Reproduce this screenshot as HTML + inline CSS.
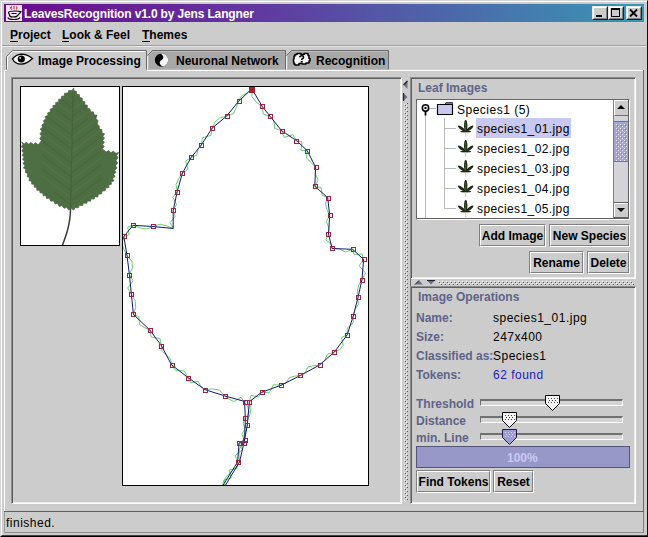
<!DOCTYPE html>
<html><head><meta charset="utf-8">
<style>
*{margin:0;padding:0;box-sizing:border-box}
html,body{width:648px;height:537px;overflow:hidden;background:#cccccc;font-family:"Liberation Sans",sans-serif}
.a{position:absolute}
.t{position:absolute;white-space:nowrap;line-height:1}
.b{font-weight:bold}
.sl{color:#5e6488;font-weight:bold;font-size:12px}
.btn{position:absolute;border-top:1px solid #808080;border-left:1px solid #808080;border-right:1px solid #fff;border-bottom:1px solid #fff;}
.rb{position:absolute;background:#cccccc;border-top:1px solid #e8e8e8;border-left:1px solid #e8e8e8;border-right:1px solid #202020;border-bottom:1px solid #202020}
.rb i{position:absolute;left:0;top:0;right:0;bottom:0;border-top:1px solid #fff;border-left:1px solid #fff;border-right:1px solid #808080;border-bottom:1px solid #808080}
.btn i{position:absolute;left:0;top:0;right:0;bottom:0;border-top:1px solid #fff;border-left:1px solid #fff;border-right:1px solid #808080;border-bottom:1px solid #808080}
.btn span{position:absolute;left:0;right:0;text-align:center;font-weight:bold;font-size:12px;color:#000;line-height:1}
</style></head><body>
<!-- window frame -->
<div class="a" style="left:0;top:0;width:648px;height:537px;border-top:1px solid #d4d4d4;border-left:1px solid #d4d4d4;border-right:1px solid #101010;border-bottom:1px solid #000"></div>
<div class="a" style="left:1px;top:1px;width:646px;height:535px;border-top:1px solid #fff;border-left:1px solid #fff;border-bottom:1px solid #404040"></div>
<div class="a" style="left:4px;top:532px;width:640px;height:1px;background:#909090"></div>
<div class="a" style="left:4px;top:512px;width:1px;height:21px;background:#a0a0a0"></div>
<div class="a" style="left:643px;top:512px;width:1px;height:21px;background:#808080"></div>
<!-- title bar -->
<div class="a" style="left:4px;top:4px;width:640px;height:18px;background:linear-gradient(90deg,#6a0a8c 0%,#6236a0 38%,#3898b4 100%)"></div>
<div class="t b" style="left:24px;top:8px;font-size:12px;letter-spacing:-0.15px;color:#fff">LeavesRecognition v1.0 by Jens Langner</div>
<!-- title icon -->
<svg class="a" style="left:6px;top:5px" width="16" height="16"><rect width="16" height="16" fill="#f6e4f6"/>
<path d="M6 4.5 L4.5 3 L6 1.5 M8 1 V4.5 M10.5 1.5 Q11.5 3 10.5 4.5" fill="none" stroke="#b03050" stroke-width="1.1"/>
<path d="M2.5 7.5 Q3 6 9 6 Q14 6 15 6.8 L11.5 10.5 Q11 12 7 12 Q3.5 12 3.5 10 Z" fill="none" stroke="#000" stroke-width="1.2"/>
<path d="M5.5 8.5 H10.5 M2 12.5 Q2 14.5 8 14.5 Q13 14.5 14 12.5" fill="none" stroke="#000" stroke-width="1.2"/>
</svg>
<!-- title buttons -->
<div class="rb" style="left:592px;top:6px;width:16px;height:14px"><i></i></div>
<div class="rb" style="left:608px;top:6px;width:16px;height:14px"><i></i></div>
<div class="rb" style="left:626px;top:6px;width:16px;height:14px"><i></i></div>
<div class="a" style="left:596px;top:15px;width:6px;height:2px;background:#000"></div>
<div class="a" style="left:611px;top:8px;width:9px;height:9px;border:1px solid #000;border-top-width:2px"></div>
<svg class="a" style="left:626px;top:6px" width="16" height="14"><path d="M4 3.5 L11 10.5 M11 3.5 L4 10.5" stroke="#000" stroke-width="1.8"/></svg>
<!-- menu -->
<div class="t b" style="left:10px;top:29px;font-size:12px;color:#000">Project</div>
<div class="t b" style="left:62px;top:29px;font-size:12px;color:#000">Look &amp; Feel</div>
<div class="t b" style="left:142px;top:29px;font-size:12px;color:#000">Themes</div>
<div class="a" style="left:10px;top:41px;width:8px;height:1px;background:#000"></div>
<div class="a" style="left:62px;top:41px;width:7px;height:1px;background:#000"></div>
<div class="a" style="left:142px;top:41px;width:8px;height:1px;background:#000"></div>
<div class="a" style="left:2px;top:45px;width:644px;height:1px;background:#a0a0a0"></div>
<div class="a" style="left:2px;top:46px;width:644px;height:1px;background:#e8e8e8"></div>

<!-- tabs -->
<div class="a" style="left:4px;top:70px;width:3px;height:1px;background:#fff"></div>
<div class="a" style="left:147px;top:70px;width:497px;height:1px;background:#fff"></div>
<div class="a" style="left:4px;top:70px;width:1px;height:442px;background:#fff"></div>
<div class="a" style="left:643px;top:70px;width:1px;height:442px;background:#686868"></div>
<div class="a" style="left:4px;top:511px;width:640px;height:1px;background:#606060"></div>
<svg class="a" style="left:0;top:46px" width="400" height="26">
<!-- tab1 selected -->
<path d="M6.5 23.5 V10.5 L12.5 4.5 H146.5 V23.5" fill="#cccccc" stroke="#6a6a6a" stroke-width="1"/>
<path d="M7.5 23.5 V10.9 L12.9 5.5 H145.5" fill="none" stroke="#ffffff" stroke-width="1"/>
<!-- tab2 -->
<path d="M147.5 23.5 V9.5 L152.5 4.5 H285.5 V23.5" fill="#a8a8a8" stroke="none"/>
<path d="M147.5 23.5 V9.5" stroke="#f0f0f0" stroke-width="1"/>
<path d="M147.5 9.5 L152.5 4.5 H285.5 V23.5" fill="none" stroke="#6a6a6a" stroke-width="1"/>
<path d="M148.5 23.5 V9.9 L152.9 5.5 H284.5" fill="none" stroke="#bcbcbc" stroke-width="1"/>
<!-- tab3 -->
<path d="M286.5 23.5 V9.5 L291.5 4.5 H388.5 V23.5" fill="#a8a8a8" stroke="none"/>
<path d="M286.5 23.5 V9.5" stroke="#f0f0f0" stroke-width="1"/>
<path d="M286.5 9.5 L291.5 4.5 H388.5 V23.5" fill="none" stroke="#6a6a6a" stroke-width="1"/>
<path d="M287.5 23.5 V9.9 L291.9 5.5 H387.5" fill="none" stroke="#bcbcbc" stroke-width="1"/>
</svg>
<!-- eye icon -->
<svg class="a" style="left:10px;top:52px" width="24" height="14">
<path d="M2.5 7 Q6 2.5 11 2.2 Q17 2.2 22.5 6.5 Q17 12 11 12.2 Q5 12 2.5 7 Z" fill="#f4f4f4" stroke="#000" stroke-width="1.3"/>
<circle cx="11.3" cy="7" r="3.6" fill="#000"/>
<circle cx="10.2" cy="6" r="1" fill="#d0d0d0"/>
</svg>
<div class="t b" style="left:38px;top:55px;font-size:12px;color:#000">Image Processing</div>
<!-- yin yang -->
<svg class="a" style="left:153px;top:52px" width="18" height="16">
<g transform="rotate(-30 8.5 8)">
<circle cx="8.5" cy="8" r="6.6" fill="#000"/>
<path d="M8.5 1.4 A6.6 6.6 0 0 1 8.5 14.6 A3.3 3.3 0 0 1 8.5 8 A3.3 3.3 0 0 0 8.5 1.4 Z" fill="#f4f4f4"/>
<circle cx="8.5" cy="4.7" r="1.2" fill="#000"/>
<circle cx="8.5" cy="11.3" r="1.2" fill="#f4f4f4"/>
</g>
</svg>
<div class="t b" style="left:176px;top:55px;font-size:12px;color:#000">Neuronal Network</div>
<!-- cloud -->
<svg class="a" style="left:288px;top:50px" width="26" height="20">
<path d="M9 3.5 H13 V4.5 H16 V3.5 H20 V5.5 H21 V8.5 H22 V11 H21 V13 H18 V14 H14 V13.5 H11 V15 H7 V14 H6 V12 H5.5 V9 H6 V6 H7 V4.5 H9 Z" fill="#f4f4f4" stroke="#000" stroke-width="1.5" stroke-linejoin="round"/>
<path d="M11.5 7.2 Q12 5.8 13.8 5.8 Q15.6 5.8 15.6 7.3 Q15.6 8.4 14 9 L13.6 10" fill="none" stroke="#000" stroke-width="1.5"/>
<rect x="12.7" y="11" width="2" height="1.6" fill="#000"/>
</svg>
<div class="t b" style="left:316px;top:55px;font-size:12px;color:#000">Recognition</div>
<!-- content: left split panel -->
<div class="a" style="left:11px;top:77px;width:391px;height:427px;border-top:1px solid #8c8c8c;border-left:1px solid #8c8c8c;box-shadow:inset 1px 1px 0 #5e5e5e,inset -1px -1px 0 #ececec;border-right:1px solid #fff;border-bottom:1px solid #fff"></div>
<div class="a" style="left:20px;top:86px;width:100px;height:160px;background:#fff;border:1px solid #000"></div>
<div class="a" style="left:122px;top:86px;width:247px;height:400px;background:#fff;border:1px solid #000"></div>
<svg class="a" style="left:0;top:0" width="130" height="250">
<clipPath id="lc"><path d="M73.7 87.9 L74.0 91.1 L76.5 91.2 L76.8 94.4 L79.3 94.6 L79.7 97.7 L82.2 98.0 L82.3 101.2 L84.8 101.6 L84.8 104.8 L87.3 105.2 L87.4 108.4 L89.8 108.7 L90.7 111.9 L93.3 111.8 L94.2 115.0 L97.0 115.2 L95.9 118.8 L98.1 120.6 L97.1 124.2 L99.2 125.8 L99.3 129.1 L101.9 129.6 L102.0 132.9 L104.7 133.8 L102.8 136.3 L104.5 138.0 L102.7 140.4 L104.4 142.2 L102.5 144.6 L104.2 146.3 L102.4 148.8 L103.6 149.9 L106.2 152.1 L108.4 150.5 L111.1 152.7 L113.2 151.2 L115.9 153.3 L118.6 152.5 L116.5 155.4 L118.1 157.7 L116.0 160.6 L117.6 162.9 L115.5 165.8 L117.1 168.1 L114.7 170.2 L116.0 172.3 L113.7 174.4 L115.0 176.5 L112.6 178.6 L113.9 181.0 L111.0 181.8 L111.5 184.2 L108.6 185.0 L109.0 187.5 L105.6 188.0 L105.3 190.6 L101.9 191.2 L101.6 193.8 L98.2 194.3 L97.8 197.0 L94.7 196.7 L94.1 199.1 L91.0 198.8 L90.5 201.2 L87.4 200.9 L86.8 203.3 L83.4 203.1 L82.5 205.6 L79.2 205.3 L78.3 207.8 L74.9 207.5 L73.8 210.1 L70.9 208.3 L68.8 210.1 L66.6 207.3 L64.1 208.3 L61.9 205.6 L59.3 206.5 L57.7 203.4 L55.0 203.8 L53.5 200.7 L50.8 201.2 L49.2 198.1 L46.5 198.5 L45.8 195.5 L43.3 195.8 L42.6 192.8 L40.2 193.1 L39.4 190.1 L36.9 190.4 L36.7 187.3 L34.3 187.3 L34.1 184.2 L31.7 184.1 L31.5 181.1 L29.0 180.8 L29.5 177.6 L27.1 176.6 L27.7 173.4 L25.3 172.4 L25.8 169.2 L23.4 168.1 L25.0 165.4 L23.0 163.8 L24.6 161.1 L22.6 159.6 L24.2 156.9 L22.2 155.4 L23.8 152.7 L21.8 151.2 L23.4 148.5 L21.4 147.0 L23.0 144.3 L21.6 142.1 L24.3 144.0 L26.2 142.3 L28.9 144.2 L30.8 142.5 L33.5 144.4 L35.4 142.7 L38.1 144.6 L39.4 143.5 L41.4 140.7 L39.7 138.7 L41.6 135.9 L39.9 133.9 L41.9 131.2 L40.2 129.0 L42.9 127.2 L41.8 124.9 L44.4 123.1 L43.4 120.8 L46.0 119.0 L45.0 116.6 L48.0 115.4 L47.6 112.9 L50.6 111.8 L50.1 109.3 L53.2 108.1 L52.8 105.6 L55.8 105.0 L55.7 102.5 L58.7 101.9 L58.6 99.4 L61.6 98.8 L61.5 96.4 L64.5 95.8 L64.5 93.2 L68.0 93.1 L68.7 90.5 L72.2 90.4 Z"/></clipPath>
<path d="M70.5 209 Q70.5 220 67 232 Q64.5 240 62.5 245" fill="none" stroke="#3c3c38" stroke-width="1.5"/>
<path d="M73.7 87.9 L74.0 91.1 L76.5 91.2 L76.8 94.4 L79.3 94.6 L79.7 97.7 L82.2 98.0 L82.3 101.2 L84.8 101.6 L84.8 104.8 L87.3 105.2 L87.4 108.4 L89.8 108.7 L90.7 111.9 L93.3 111.8 L94.2 115.0 L97.0 115.2 L95.9 118.8 L98.1 120.6 L97.1 124.2 L99.2 125.8 L99.3 129.1 L101.9 129.6 L102.0 132.9 L104.7 133.8 L102.8 136.3 L104.5 138.0 L102.7 140.4 L104.4 142.2 L102.5 144.6 L104.2 146.3 L102.4 148.8 L103.6 149.9 L106.2 152.1 L108.4 150.5 L111.1 152.7 L113.2 151.2 L115.9 153.3 L118.6 152.5 L116.5 155.4 L118.1 157.7 L116.0 160.6 L117.6 162.9 L115.5 165.8 L117.1 168.1 L114.7 170.2 L116.0 172.3 L113.7 174.4 L115.0 176.5 L112.6 178.6 L113.9 181.0 L111.0 181.8 L111.5 184.2 L108.6 185.0 L109.0 187.5 L105.6 188.0 L105.3 190.6 L101.9 191.2 L101.6 193.8 L98.2 194.3 L97.8 197.0 L94.7 196.7 L94.1 199.1 L91.0 198.8 L90.5 201.2 L87.4 200.9 L86.8 203.3 L83.4 203.1 L82.5 205.6 L79.2 205.3 L78.3 207.8 L74.9 207.5 L73.8 210.1 L70.9 208.3 L68.8 210.1 L66.6 207.3 L64.1 208.3 L61.9 205.6 L59.3 206.5 L57.7 203.4 L55.0 203.8 L53.5 200.7 L50.8 201.2 L49.2 198.1 L46.5 198.5 L45.8 195.5 L43.3 195.8 L42.6 192.8 L40.2 193.1 L39.4 190.1 L36.9 190.4 L36.7 187.3 L34.3 187.3 L34.1 184.2 L31.7 184.1 L31.5 181.1 L29.0 180.8 L29.5 177.6 L27.1 176.6 L27.7 173.4 L25.3 172.4 L25.8 169.2 L23.4 168.1 L25.0 165.4 L23.0 163.8 L24.6 161.1 L22.6 159.6 L24.2 156.9 L22.2 155.4 L23.8 152.7 L21.8 151.2 L23.4 148.5 L21.4 147.0 L23.0 144.3 L21.6 142.1 L24.3 144.0 L26.2 142.3 L28.9 144.2 L30.8 142.5 L33.5 144.4 L35.4 142.7 L38.1 144.6 L39.4 143.5 L41.4 140.7 L39.7 138.7 L41.6 135.9 L39.9 133.9 L41.9 131.2 L40.2 129.0 L42.9 127.2 L41.8 124.9 L44.4 123.1 L43.4 120.8 L46.0 119.0 L45.0 116.6 L48.0 115.4 L47.6 112.9 L50.6 111.8 L50.1 109.3 L53.2 108.1 L52.8 105.6 L55.8 105.0 L55.7 102.5 L58.7 101.9 L58.6 99.4 L61.6 98.8 L61.5 96.4 L64.5 95.8 L64.5 93.2 L68.0 93.1 L68.7 90.5 L72.2 90.4 Z" fill="#4e6e44" stroke="#42603a" stroke-width="0.7"/>
<g clip-path="url(#lc)" stroke-width="1" fill="none" opacity="0.55"><path d="M71.5 100 L53.5 86.5" stroke="#5c7c4e"/><path d="M71.5 103 L89.5 89.5" stroke="#41603a"/><path d="M71.5 107 L53.5 93.5" stroke="#41603a"/><path d="M71.5 110 L89.5 96.5" stroke="#5c7c4e"/><path d="M71.5 114 L53.5 100.5" stroke="#5c7c4e"/><path d="M71.5 117 L89.5 103.5" stroke="#41603a"/><path d="M71.5 121 L53.5 107.5" stroke="#41603a"/><path d="M71.5 124 L89.5 110.5" stroke="#5c7c4e"/><path d="M71.5 128 L53.5 114.5" stroke="#5c7c4e"/><path d="M71.5 131 L89.5 117.5" stroke="#41603a"/><path d="M71.5 135 L41.5 112.5" stroke="#41603a"/><path d="M71.5 138 L101.5 115.5" stroke="#5c7c4e"/><path d="M71.5 142 L41.5 119.5" stroke="#5c7c4e"/><path d="M71.5 145 L101.5 122.5" stroke="#41603a"/><path d="M71.5 149 L41.5 126.5" stroke="#41603a"/><path d="M71.5 152 L101.5 129.5" stroke="#5c7c4e"/><path d="M71.5 156 L41.5 133.5" stroke="#5c7c4e"/><path d="M71.5 159 L101.5 136.5" stroke="#41603a"/><path d="M71.5 163 L41.5 140.5" stroke="#41603a"/><path d="M71.5 166 L101.5 143.5" stroke="#5c7c4e"/><path d="M71.5 170 L41.5 147.5" stroke="#5c7c4e"/><path d="M71.5 173 L101.5 150.5" stroke="#41603a"/><path d="M71.5 177 L41.5 154.5" stroke="#41603a"/><path d="M71.5 180 L101.5 157.5" stroke="#5c7c4e"/><path d="M71.5 184 L41.5 161.5" stroke="#5c7c4e"/><path d="M71.5 187 L101.5 164.5" stroke="#41603a"/><path d="M71.5 191 L41.5 168.5" stroke="#41603a"/><path d="M71.5 194 L101.5 171.5" stroke="#5c7c4e"/><path d="M71.5 198 L41.5 175.5" stroke="#5c7c4e"/><path d="M71.5 201 L101.5 178.5" stroke="#41603a"/><path d="M71.5 205 L53.5 191.5" stroke="#41603a"/><path d="M71.5 208 L89.5 194.5" stroke="#5c7c4e"/></g>
<path d="M73 92 Q72 150 70.5 210" stroke="#41603a" stroke-width="1.1" fill="none" opacity="0.7"/>
</svg>
<svg class="a" style="left:0;top:0" width="648" height="537">
<clipPath id="cc"><rect x="123" y="87" width="245" height="398"/></clipPath><g clip-path="url(#cc)">
<path d="M251.8 88.8 L247.4 93.0 L241.6 95.7 L238.6 101.3 L236.2 107.5 L233.7 113.7 L226.6 116.1 L219.8 117.8 L215.0 121.9 L212.1 128.2 L211.0 135.4 L202.4 137.8 L201.3 145.0 L197.9 149.1 L196.9 155.2 L191.2 157.4 L185.6 161.2 L188.0 169.3 L182.4 173.1 L178.7 178.7 L176.0 184.6 L177.2 191.6 L172.9 197.2 L176.5 204.5 L173.2 210.4 L175.2 216.4 L170.2 222.5 L173.2 228.5 L166.7 225.8 L160.1 224.2 L153.1 226.5 L146.3 229.1 L139.6 227.7 L133.1 225.3 L127.7 227.1 L129.2 234.7 L123.8 236.5 L121.9 243.3 L124.0 249.4 L127.0 255.4 L131.8 261.3 L132.6 267.7 L129.4 274.6 L133.1 280.9 L127.7 288.0 L131.4 294.3 L135.1 300.7 L135.7 307.4 L133.4 314.4 L138.9 316.9 L139.5 324.4 L144.3 327.5 L149.8 330.0 L151.2 337.0 L159.9 338.5 L161.3 345.5 L162.1 351.3 L166.4 355.1 L170.7 359.0 L171.5 364.8 L175.7 370.6 L184.3 370.9 L187.9 377.5 L190.5 383.0 L198.2 381.2 L200.8 386.6 L205.1 389.7 L212.5 388.9 L219.4 390.0 L224.7 395.9 L229.3 399.3 L234.1 401.6 L240.9 397.3 L244.6 402.0 L247.8 407.2 L249.1 412.5 L245.3 418.0 L243.1 423.4 L244.9 428.9 L241.8 434.2 L244.6 439.7 L243.4 444.0 L239.0 443.2 L242.5 449.8 L235.1 455.5 L237.6 462.0 L237.1 468.4 L229.0 470.0 L231.1 478.0 L223.8 480.1 L222.5 486.0 L223.8 484.0 L225.0 486.0 L224.5 479.1 L228.2 474.8 L232.0 470.6 L236.6 466.8 L239.5 462.0 L239.0 455.3 L239.5 448.8 L243.9 443.2 L243.1 436.8 L246.2 431.1 L247.3 425.0 L247.8 419.2 L250.3 413.5 L250.9 407.7 L249.4 401.7 L251.0 395.4 L258.7 397.0 L261.5 392.3 L269.1 392.8 L273.6 384.7 L281.2 385.2 L286.0 382.8 L289.5 377.6 L294.8 376.1 L300.5 375.4 L305.2 372.8 L308.1 366.7 L313.8 365.8 L319.5 365.0 L324.5 360.7 L327.5 354.1 L334.4 352.0 L340.0 349.5 L343.2 345.2 L341.6 337.4 L347.2 334.9 L347.3 328.1 L353.1 323.0 L353.2 316.2 L354.8 309.9 L358.3 304.2 L358.0 297.4 L357.4 291.0 L358.7 285.0 L362.0 279.5 L365.5 273.0 L359.1 265.8 L363.6 259.4 L362.0 253.8 L354.2 254.9 L352.6 249.3 L345.6 252.0 L338.9 248.8 L332.1 248.5 L330.9 243.7 L325.8 239.9 L328.5 234.1 L328.9 227.8 L326.3 221.3 L329.7 215.2 L327.0 209.6 L325.4 203.8 L327.7 197.6 L322.1 195.3 L321.1 187.8 L314.8 186.3 L318.1 180.0 L315.3 173.5 L315.6 167.1 L311.0 162.5 L306.4 157.9 L307.2 150.6 L300.9 150.2 L302.0 141.7 L296.4 140.6 L293.1 134.8 L284.2 137.3 L281.5 130.6 L274.6 128.4 L274.0 121.2 L270.3 116.5 L263.2 114.0 L262.3 106.5 L256.2 102.1 L251.9 96.7 L251.8 88.8" fill="none" stroke="#6cce6c" stroke-width="1" stroke-linejoin="round"/>
<path d="M251.8 88.8 L238.6 101.3 L226.6 116.1 L212.1 128.2 L201.3 145.0 L191.2 157.4 L182.4 173.1 L177.2 191.6 L173.2 210.4 L173.2 228.5 L153.1 226.5 L133.1 225.3 L123.8 236.5 L127.0 255.4 L129.4 274.6 L131.4 294.3 L133.4 314.4 L149.8 330.0 L161.3 345.5 L171.5 364.8 L187.9 377.5 L205.1 389.7 L224.7 395.9 L245.2 401.6 L244.6 402.0 L245.3 418.0 L244.6 439.7 L239.0 443.2 L237.6 462.0 L222.5 486.0 L225.0 486.0 L239.5 462.0 L243.9 443.2 L247.3 425.0 L249.4 401.7 L261.5 392.3 L281.2 385.2 L300.5 375.4 L319.5 365.0 L334.4 352.0 L347.2 334.9 L353.2 316.2 L358.0 297.4 L362.0 279.5 L363.6 259.4 L352.6 249.3 L332.1 248.5 L328.5 234.1 L329.7 215.2 L327.7 197.6 L314.8 186.3 L315.6 167.1 L307.2 150.6 L296.4 140.6 L281.5 130.6 L270.3 116.5 L262.3 106.5 L251.8 88.8" fill="none" stroke="#111c70" stroke-width="1" stroke-linejoin="round"/>
<g fill="none" stroke="#9c2444" stroke-width="1"><rect x="237.5" y="99.5" width="4" height="4"/><rect x="225.5" y="114.5" width="4" height="4"/><rect x="210.5" y="126.5" width="4" height="4"/><rect x="199.5" y="143.5" width="4" height="4"/><rect x="189.5" y="155.5" width="4" height="4"/><rect x="180.5" y="171.5" width="4" height="4"/><rect x="175.5" y="190.5" width="4" height="4"/><rect x="171.5" y="208.5" width="4" height="4"/><rect x="151.5" y="224.5" width="4" height="4"/><rect x="131.5" y="223.5" width="4" height="4"/><rect x="122.5" y="234.5" width="4" height="4"/><rect x="125.5" y="253.5" width="4" height="4"/><rect x="127.5" y="273.5" width="4" height="4"/><rect x="129.5" y="292.5" width="4" height="4"/><rect x="131.5" y="312.5" width="4" height="4"/><rect x="148.5" y="328.5" width="4" height="4"/><rect x="159.5" y="344.5" width="4" height="4"/><rect x="170.5" y="363.5" width="4" height="4"/><rect x="186.5" y="376.5" width="4" height="4"/><rect x="203.5" y="388.5" width="4" height="4"/><rect x="223.5" y="394.5" width="4" height="4"/><rect x="243.5" y="400.5" width="4" height="4"/><rect x="243.5" y="400.5" width="4" height="4"/><rect x="243.5" y="416.5" width="4" height="4"/><rect x="243.5" y="438.5" width="4" height="4"/><rect x="237.5" y="441.5" width="4" height="4"/><rect x="236.5" y="460.5" width="4" height="4"/><rect x="242.5" y="441.5" width="4" height="4"/><rect x="245.5" y="423.5" width="4" height="4"/><rect x="247.5" y="400.5" width="4" height="4"/><rect x="260.5" y="390.5" width="4" height="4"/><rect x="279.5" y="383.5" width="4" height="4"/><rect x="298.5" y="373.5" width="4" height="4"/><rect x="318.5" y="363.5" width="4" height="4"/><rect x="332.5" y="350.5" width="4" height="4"/><rect x="345.5" y="333.5" width="4" height="4"/><rect x="351.5" y="314.5" width="4" height="4"/><rect x="356.5" y="295.5" width="4" height="4"/><rect x="360.5" y="278.5" width="4" height="4"/><rect x="362.5" y="257.5" width="4" height="4"/><rect x="351.5" y="247.5" width="4" height="4"/><rect x="330.5" y="246.5" width="4" height="4"/><rect x="326.5" y="232.5" width="4" height="4"/><rect x="328.5" y="213.5" width="4" height="4"/><rect x="326.5" y="196.5" width="4" height="4"/><rect x="313.5" y="184.5" width="4" height="4"/><rect x="314.5" y="165.5" width="4" height="4"/><rect x="305.5" y="149.5" width="4" height="4"/><rect x="294.5" y="139.5" width="4" height="4"/><rect x="280.5" y="129.5" width="4" height="4"/><rect x="268.5" y="114.5" width="4" height="4"/><rect x="260.5" y="104.5" width="4" height="4"/><rect x="250.5" y="87.5" width="4" height="4"/></g>
<rect x="249" y="87" width="6" height="6" fill="#a82030"/>
</g></svg>


<!-- vertical divider -->
<svg class="a" style="left:402px;top:78px" width="8" height="426">
<path d="M5.5 3 L1.5 7 L5.5 11 Z" fill="#6c7088"/><path d="M5.5 3 L1.5 7" stroke="#202030" stroke-width="1.2"/>
<path d="M1.5 15 L5.5 19 L1.5 23 Z" fill="#6c7088"/><path d="M1.5 15 V23" stroke="#202030" stroke-width="1.2"/>
<pattern id="dots" x="2" y="2" width="4" height="4" patternUnits="userSpaceOnUse"><rect x="0" y="0" width="1" height="1" fill="#ffffff"/><rect x="1" y="1" width="1" height="1" fill="#555"/><rect x="2" y="2" width="1" height="1" fill="#ffffff"/><rect x="3" y="3" width="1" height="1" fill="#555"/></pattern>
<rect x="2" y="25" width="4" height="398" fill="url(#dots)"/>
</svg>
<!-- right upper panel -->
<div class="a" style="left:410px;top:77px;width:226px;height:202px;border-top:1px solid #8c8c8c;border-left:1px solid #8c8c8c;box-shadow:inset 1px 1px 0 #5e5e5e,inset -1px -1px 0 #ececec;border-right:1px solid #fff;border-bottom:1px solid #fff"></div>
<div class="t sl" style="left:418px;top:82px">Leaf Images</div>
<div class="a" style="left:416px;top:99px;width:214px;height:121px;background:#fff;border-top:1px solid #686868;border-left:1px solid #686868;border-right:1px solid #fff;border-bottom:1px solid #fff;box-shadow:inset -1px -1px 0 #606060"></div>
<div class="a" style="left:425px;top:115px;width:1px;height:103px;background:#b8b8c8"></div>
<div class="a" style="left:444px;top:118px;width:1px;height:91px;background:#b8b8c8"></div>
<div class="a" style="left:428px;top:108px;width:8px;height:1px;background:#b8b8c8"></div>
<svg class="a" style="left:420px;top:102px" width="12" height="14"><circle cx="5.5" cy="6" r="3.2" fill="#f0f0f8" stroke="#000" stroke-width="1.5"/><rect x="4.5" y="5" width="2" height="2" fill="#000"/><rect x="4.6" y="9" width="1.8" height="4.5" fill="#000"/></svg>
<svg class="a" style="left:436px;top:101px" width="18" height="15"><path d="M10 1.5 H16.5 V3.5 H9 Z" fill="#70708c" stroke="#303040" stroke-width="0.8"/><path d="M1.5 3.5 H16.5 V13.5 H1.5 Z" fill="#c8c8f0" stroke="#000" stroke-width="1.2"/></svg>
<div class="t" style="left:457px;top:104px;font-size:12px;letter-spacing:0.5px;color:#000">Species1 (5)</div>
<div class="a" style="left:476px;top:118px;width:95px;height:20px;background:#c8c8f0"></div>
<div class="a" style="left:444px;top:128px;width:12px;height:1px;background:#b8b8c8"></div>
<div class="a" style="left:457px;top:119px;width:16px;height:16px"><svg width="18" height="20"><g fill="#1f2a16"><ellipse cx="8.7" cy="6.8" rx="1.7" ry="6"/><ellipse cx="4.8" cy="9.6" rx="1.4" ry="4.6" transform="rotate(-52 4.8 9.6)"/><ellipse cx="12.6" cy="9.6" rx="1.4" ry="4.6" transform="rotate(52 12.6 9.6)"/><ellipse cx="8.7" cy="12.6" rx="5.5" ry="0.9"/></g><path d="M8.7 3 V12" stroke="#4a6a34" stroke-width="0.8"/><path d="M8.7 13 V18" stroke="#c8c8c8" stroke-width="1"/></svg></div>
<div class="t" style="left:477px;top:123px;font-size:12px;letter-spacing:0.4px;color:#000">species1_01.jpg</div>
<div class="a" style="left:444px;top:148px;width:12px;height:1px;background:#b8b8c8"></div>
<div class="a" style="left:457px;top:139px;width:16px;height:16px"><svg width="18" height="20"><g fill="#1f2a16"><ellipse cx="8.7" cy="6.8" rx="1.7" ry="6"/><ellipse cx="4.8" cy="9.6" rx="1.4" ry="4.6" transform="rotate(-52 4.8 9.6)"/><ellipse cx="12.6" cy="9.6" rx="1.4" ry="4.6" transform="rotate(52 12.6 9.6)"/><ellipse cx="8.7" cy="12.6" rx="5.5" ry="0.9"/></g><path d="M8.7 3 V12" stroke="#4a6a34" stroke-width="0.8"/><path d="M8.7 13 V18" stroke="#c8c8c8" stroke-width="1"/></svg></div>
<div class="t" style="left:477px;top:143px;font-size:12px;letter-spacing:0.4px;color:#000">species1_02.jpg</div>
<div class="a" style="left:444px;top:168px;width:12px;height:1px;background:#b8b8c8"></div>
<div class="a" style="left:457px;top:159px;width:16px;height:16px"><svg width="18" height="20"><g fill="#1f2a16"><ellipse cx="8.7" cy="6.8" rx="1.7" ry="6"/><ellipse cx="4.8" cy="9.6" rx="1.4" ry="4.6" transform="rotate(-52 4.8 9.6)"/><ellipse cx="12.6" cy="9.6" rx="1.4" ry="4.6" transform="rotate(52 12.6 9.6)"/><ellipse cx="8.7" cy="12.6" rx="5.5" ry="0.9"/></g><path d="M8.7 3 V12" stroke="#4a6a34" stroke-width="0.8"/><path d="M8.7 13 V18" stroke="#c8c8c8" stroke-width="1"/></svg></div>
<div class="t" style="left:477px;top:163px;font-size:12px;letter-spacing:0.4px;color:#000">species1_03.jpg</div>
<div class="a" style="left:444px;top:188px;width:12px;height:1px;background:#b8b8c8"></div>
<div class="a" style="left:457px;top:179px;width:16px;height:16px"><svg width="18" height="20"><g fill="#1f2a16"><ellipse cx="8.7" cy="6.8" rx="1.7" ry="6"/><ellipse cx="4.8" cy="9.6" rx="1.4" ry="4.6" transform="rotate(-52 4.8 9.6)"/><ellipse cx="12.6" cy="9.6" rx="1.4" ry="4.6" transform="rotate(52 12.6 9.6)"/><ellipse cx="8.7" cy="12.6" rx="5.5" ry="0.9"/></g><path d="M8.7 3 V12" stroke="#4a6a34" stroke-width="0.8"/><path d="M8.7 13 V18" stroke="#c8c8c8" stroke-width="1"/></svg></div>
<div class="t" style="left:477px;top:183px;font-size:12px;letter-spacing:0.4px;color:#000">species1_04.jpg</div>
<div class="a" style="left:444px;top:208px;width:12px;height:1px;background:#b8b8c8"></div>
<div class="a" style="left:457px;top:199px;width:16px;height:16px"><svg width="18" height="20"><g fill="#1f2a16"><ellipse cx="8.7" cy="6.8" rx="1.7" ry="6"/><ellipse cx="4.8" cy="9.6" rx="1.4" ry="4.6" transform="rotate(-52 4.8 9.6)"/><ellipse cx="12.6" cy="9.6" rx="1.4" ry="4.6" transform="rotate(52 12.6 9.6)"/><ellipse cx="8.7" cy="12.6" rx="5.5" ry="0.9"/></g><path d="M8.7 3 V12" stroke="#4a6a34" stroke-width="0.8"/><path d="M8.7 13 V18" stroke="#c8c8c8" stroke-width="1"/></svg></div>
<div class="t" style="left:477px;top:203px;font-size:12px;letter-spacing:0.4px;color:#000">species1_05.jpg</div>

<!-- scrollbar -->
<div class="a" style="left:613px;top:100px;width:1px;height:118px;background:#808080"></div>
<div class="a" style="left:614px;top:100px;width:14px;height:118px;background:#d4d4d8"></div>
<div class="a" style="left:614px;top:100px;width:14px;height:16px;background:#cccccc;border-top:1px solid #fff;border-left:1px solid #fff;border-bottom:1px solid #707070"></div>
<svg class="a" style="left:614px;top:100px" width="14" height="16"><path d="M3 9 L7 5 L11 9 Z" fill="#000"/></svg>
<div class="a" style="left:614px;top:202px;width:14px;height:16px;background:#cccccc;border-top:1px solid #606060;border-bottom:1px solid #606060;box-shadow:inset 1px 1px 0 #fff"></div>
<svg class="a" style="left:614px;top:202px" width="14" height="16"><path d="M3 6 L7 10 L11 6 Z" fill="#000"/></svg>
<div class="a" style="left:614px;top:121px;width:14px;height:41px;background:#a4a4dc;border-top:1px solid #707098;border-bottom:1px solid #707098"></div>
<svg class="a" style="left:615px;top:123px" width="12" height="38"><pattern id="tdots" width="4" height="4" patternUnits="userSpaceOnUse"><rect x="1" y="1" width="1" height="1" fill="#f0f0ff"/><rect x="3" y="3" width="1" height="1" fill="#f0f0ff"/><rect x="2" y="2" width="1" height="1" fill="#7878b0"/></pattern><rect width="12" height="38" fill="url(#tdots)"/></svg>

<!-- buttons -->
<div class="btn" style="left:479px;top:224px;width:67px;height:23px"><i></i><span style="top:5px">Add Image</span></div>
<div class="btn" style="left:549px;top:224px;width:81px;height:23px"><i></i><span style="top:5px">New Species</span></div>
<div class="btn" style="left:529px;top:251px;width:55px;height:23px"><i></i><span style="top:5px">Rename</span></div>
<div class="btn" style="left:587px;top:251px;width:43px;height:23px"><i></i><span style="top:5px">Delete</span></div>

<!-- horizontal divider -->
<svg class="a" style="left:411px;top:279px" width="225" height="8">
<path d="M4 5.5 L8 1.5 L12 5.5 Z" fill="#6c7088"/><path d="M4 5.5 L8 1.5" stroke="#202030" stroke-width="1"/>
<path d="M16 1.5 L20 5.5 L24 1.5 Z" fill="#6c7088"/><path d="M16 1.5 H24" stroke="#202030" stroke-width="1"/>
<pattern id="hdots" x="27" y="2" width="4" height="4" patternUnits="userSpaceOnUse"><rect x="0" y="0" width="1" height="1" fill="#ffffff"/><rect x="1" y="1" width="1" height="1" fill="#555"/><rect x="2" y="2" width="1" height="1" fill="#ffffff"/><rect x="3" y="3" width="1" height="1" fill="#555"/></pattern>
<rect x="27" y="2" width="196" height="4" fill="url(#hdots)"/>
</svg>

<div class="a" style="left:410px;top:278px;width:1px;height:9px;background:#707070"></div>
<!-- lower panel -->
<div class="a" style="left:410px;top:286px;width:226px;height:218px;border-top:1px solid #8c8c8c;border-left:1px solid #8c8c8c;box-shadow:inset 1px 1px 0 #5e5e5e,inset -1px -1px 0 #ececec;border-right:1px solid #fff;border-bottom:1px solid #fff"></div>
<div class="t sl" style="left:418px;top:291px">Image Operations</div>
<div class="t sl" style="left:416px;top:312px">Name:</div>
<div class="t sl" style="left:416px;top:331px">Size:</div>
<div class="t sl" style="left:416px;top:350px">Classified as:</div>
<div class="t sl" style="left:416px;top:369px">Tokens:</div>
<div class="t" style="left:493px;top:312px;font-size:12px;letter-spacing:0.5px;color:#000">species1_01.jpg</div>
<div class="t" style="left:493px;top:331px;font-size:12px;letter-spacing:0.5px;color:#000">247x400</div>
<div class="t" style="left:493px;top:350px;font-size:12px;letter-spacing:0.5px;color:#000">Species1</div>
<div class="t" style="left:493px;top:369px;font-size:12px;letter-spacing:0.5px;color:#2020c0">62 found</div>
<div class="t sl" style="left:416px;top:398px">Threshold</div>
<div class="t sl" style="left:416px;top:415px">Distance</div>
<div class="t sl" style="left:416px;top:432px">min. Line</div>
<!-- slider tracks -->
<div class="a" style="left:480px;top:399px;width:143px;height:7px;background:#d4d4d4;border-top:2px solid #707070;border-left:1px solid #707070;border-right:1px solid #fff;border-bottom:1px solid #fff"></div>
<div class="a" style="left:480px;top:416px;width:143px;height:7px;background:#d4d4d4;border-top:2px solid #707070;border-left:1px solid #707070;border-right:1px solid #fff;border-bottom:1px solid #fff"></div>
<div class="a" style="left:480px;top:433px;width:143px;height:7px;background:#d4d4d4;border-top:2px solid #707070;border-left:1px solid #707070;border-right:1px solid #fff;border-bottom:1px solid #fff"></div>
<svg class="a" style="left:540px;top:392px" width="24" height="22"><path d="M5.5 3.5 H19.5 V11.5 L12.5 18.5 L5.5 11.5 Z" fill="#f4f4f4" stroke="#000" stroke-width="1"/><g fill="#404040"><rect x="8" y="6" width="1" height="1"/><rect x="11" y="6" width="1" height="1"/><rect x="14" y="6" width="1" height="1"/><rect x="17" y="6" width="1" height="1"/><rect x="9" y="8" width="1" height="1"/><rect x="12" y="8" width="1" height="1"/><rect x="15" y="8" width="1" height="1"/><rect x="8" y="10" width="1" height="1"/><rect x="11" y="10" width="1" height="1"/><rect x="14" y="10" width="1" height="1"/><rect x="17" y="10" width="1" height="1"/></g></svg>
<svg class="a" style="left:497px;top:409px" width="24" height="22"><path d="M5.5 3.5 H19.5 V11.5 L12.5 18.5 L5.5 11.5 Z" fill="#f4f4f4" stroke="#000" stroke-width="1"/><g fill="#404040"><rect x="8" y="6" width="1" height="1"/><rect x="11" y="6" width="1" height="1"/><rect x="14" y="6" width="1" height="1"/><rect x="17" y="6" width="1" height="1"/><rect x="9" y="8" width="1" height="1"/><rect x="12" y="8" width="1" height="1"/><rect x="15" y="8" width="1" height="1"/><rect x="8" y="10" width="1" height="1"/><rect x="11" y="10" width="1" height="1"/><rect x="14" y="10" width="1" height="1"/><rect x="17" y="10" width="1" height="1"/></g></svg>
<svg class="a" style="left:497px;top:426px" width="24" height="22"><path d="M5.5 3.5 H19.5 V11.5 L12.5 18.5 L5.5 11.5 Z" fill="#9c9cd8" stroke="#202040" stroke-width="1"/><g fill="#d8d8ff"><rect x="8" y="6" width="1" height="1"/><rect x="11" y="6" width="1" height="1"/><rect x="14" y="6" width="1" height="1"/><rect x="17" y="6" width="1" height="1"/><rect x="9" y="8" width="1" height="1"/><rect x="12" y="8" width="1" height="1"/><rect x="15" y="8" width="1" height="1"/><rect x="8" y="10" width="1" height="1"/><rect x="11" y="10" width="1" height="1"/><rect x="14" y="10" width="1" height="1"/><rect x="17" y="10" width="1" height="1"/></g></svg>
<!-- progress -->
<div class="a" style="left:416px;top:446px;width:214px;height:22px;background:#9898c8;border:1px solid #55557a"></div>
<div class="t b" style="left:507px;top:452px;font-size:12px;color:#c8c8f0">100%</div>
<div class="btn" style="left:416px;top:470px;width:75px;height:23px"><i></i><span style="top:5px">Find Tokens</span></div>
<div class="btn" style="left:493px;top:470px;width:41px;height:23px"><i></i><span style="top:5px">Reset</span></div>
<!-- status -->
<div class="t" style="left:6px;top:517px;font-size:12px;letter-spacing:0.5px;color:#000">finished.</div>
</body></html>
